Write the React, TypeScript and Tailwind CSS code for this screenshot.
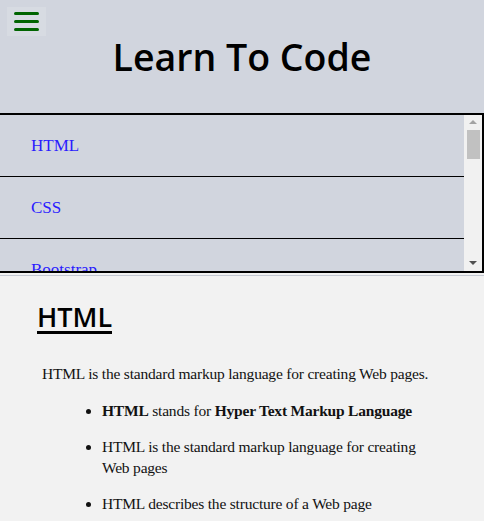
const topics = ['HTML', 'CSS', 'Bootstrap', 'JavaScript', 'jQuery', 'React'];

export default function App() {
  return (
    <div className="min-h-screen bg-[#f2f2f2] font-['Liberation_Serif',serif] text-[#111]">
      {/* Header */}
      <header className="relative h-[113px] bg-[#d1d5de]">
        <button className="absolute left-[7px] top-[7px] flex h-[29px] w-[39px] flex-col items-center justify-center gap-[4.5px] bg-[#d7dbe2]">
          <span className="block h-[3.5px] w-[25px] rounded-full bg-[#006400]" />
          <span className="block h-[3.5px] w-[25px] rounded-full bg-[#006400]" />
          <span className="block h-[3.5px] w-[25px] rounded-full bg-[#006400]" />
        </button>
        <h1 className="pt-[38px] text-center font-['Open_Sans',sans-serif] text-[37.5px] font-semibold leading-none text-black">
          Learn To Code
        </h1>
      </header>

      {/* Topic list with its scrollbar */}
      <nav className="flex h-[160px] border-y-2 border-r-2 border-black bg-[#d1d5de]">
        <div className="flex-1 overflow-hidden">
          {topics.map((t) => (
            <div key={t} className="flex h-[62px] items-center border-b border-black pl-[31px]">
              <a href="#" className="text-[17px] text-[#2a1cff]">
                {t}
              </a>
            </div>
          ))}
        </div>
        <div className="flex w-[18px] flex-col items-center bg-[#f1f1f1]">
          <div className="mt-[5px] h-0 w-0 border-x-[4px] border-b-[4px] border-x-transparent border-b-[#a3a3a3]" />
          <div className="mt-[6px] h-[29px] w-[13px] bg-[#c1c1c1]" />
          <div className="flex-1" />
          <div className="mb-[6px] h-0 w-0 border-x-[4px] border-t-[4px] border-x-transparent border-t-[#505050]" />
        </div>
      </nav>
      <div className="h-[3px] border-b border-[#c3c8d2]" />

      {/* Content */}
      <main className="px-[37px] pb-6">
        <h2 className="mt-[27px] inline-block border-b-[3px] border-black font-['Open_Sans',sans-serif] text-[27px] font-semibold leading-[28px] text-black">
          HTML
        </h2>
        <p className="mt-[29px] pl-[5px] text-[15.5px] leading-[21px] tracking-[-0.2px]">
          HTML is the standard markup language for creating Web pages.
        </p>
        <ul className="mt-[16px] list-disc space-y-[15px] pl-[65px] pr-[20px] text-[15.5px] leading-[21px] tracking-[-0.2px]">
          <li>
            <b>HTML</b> stands for <b>Hyper Text Markup Language</b>
          </li>
          <li>HTML is the standard markup language for creating Web pages</li>
          <li>HTML describes the structure of a Web page</li>
          <li>HTML consists of a series of elements</li>
        </ul>
      </main>
    </div>
  );
}
